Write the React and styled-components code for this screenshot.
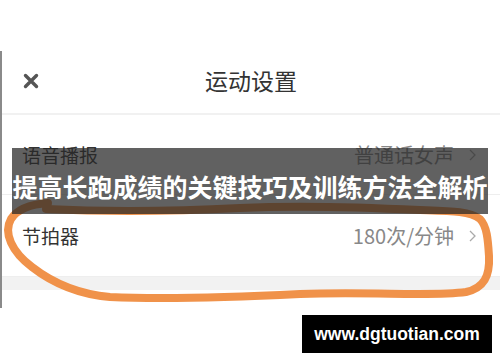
import React from 'react'
import styled, { createGlobalStyle } from 'styled-components';

const GlobalStyle = createGlobalStyle`
  body {
    margin: 0;
    background: #fff;
    font-family: "Noto Sans CJK SC", "Noto Sans", sans-serif;
  }
`;

const settings = [
  { label: '语音播报', value: '普通话女声', height: 80 },
  { label: '节拍器', value: '180次/分钟', height: 82 },
];

const CloseIcon = () => (
  <svg width="16" height="16" viewBox="0 0 16 16">
    <path d="M2.5 2.5 L13.5 13.5 M13.5 2.5 L2.5 13.5" stroke="#555" strokeWidth="3.4" strokeLinecap="round" />
  </svg>
);

const Chevron = () => (
  <svg width="7" height="12" viewBox="0 0 7 12">
    <polyline points="1,1 6,6 1,11" fill="none" stroke="#aaa" strokeWidth="1.3" />
  </svg>
);

export default function App() {
  return (
    <>
      <GlobalStyle />
      <Page>
        <Phone>
          <Header>
            <CloseBtn><CloseIcon /></CloseBtn>
            <Title>运动设置</Title>
            <span />
          </Header>
          {settings.map((s) => (
            <Row key={s.label} $h={s.height}>
              <Label>{s.label}</Label>
              <Value>
                {s.value}
                <Chevron />
              </Value>
            </Row>
          ))}
          <SectionGap />
        </Phone>

        {/* 手描きの丸 */}
        <Scribble viewBox="0 0 500 362" width="500" height="362">
          <path
            d="M48 203 C34 204 18 208 11 219 C3 233 12 252 32 267 C50 281 76 294 110 297
               C170 300 240 297 300 294 C370 291 430 297 466 292 C484 288 490 276 489 256
               C488 240 487 226 480 219 C470 211 450 211 420 210 C360 207 300 205 240 208
               C180 211 110 212 46 209"
            fill="none"
            stroke="#F0924A"
            strokeWidth="8"
            strokeLinecap="round"
            strokeLinejoin="round"
          />
        </Scribble>

        <Banner>提高长跑成绩的关键技巧及训练方法全解析</Banner>
        <Watermark>www.dgtuotian.com</Watermark>
      </Page>
    </>
  )
}

const Page = styled.div`
  position: relative;
  width: 500px;
  height: 362px;
  padding-top: 51px;
  box-sizing: border-box;
  overflow: hidden;
`;

const Phone = styled.div`
  height: 257px;
  border-left: 2px solid #8a8a8a;
  display: flex;
  flex-direction: column;
`;

const Header = styled.div`
  height: 64px;
  box-sizing: border-box;
  padding-bottom: 4px;
  display: grid;
  grid-template-columns: 1fr auto 1fr;
  align-items: center;
  border-bottom: 2px solid #f1f1f1;
`;

const CloseBtn = styled.div`
  padding-left: 21px;
  padding-top: 2px;
  display: flex;
  align-items: center;
`;

const Title = styled.div`
  font-size: 23px;
  color: #333;
`;

const Row = styled.div`
  height: ${(p) => p.$h}px;
  box-sizing: border-box;
  display: flex;
  align-items: center;
  justify-content: space-between;
  padding: 0 24px 0 20px;
  border-bottom: 1px solid #eee;
`;

const Label = styled.div`
  font-size: 19px;
  color: #333;
`;

const Value = styled.div`
  display: flex;
  align-items: center;
  gap: 15px;
  font-size: 20px;
  color: #888;
`;

const SectionGap = styled.div`
  height: 13px;
  background: #f2f2f2;
`;

const Scribble = styled.svg`
  position: absolute;
  left: 0;
  top: 0;
  pointer-events: none;
`;

const Banner = styled.div`
  position: absolute;
  left: 12px;
  top: 148px;
  width: 476px;
  height: 66px;
  background: rgba(40, 40, 40, 0.735);
  color: #fff;
  font-size: 25px;
  font-weight: 700;
  line-height: 1;
  display: flex;
  align-items: center;
  justify-content: center;
  padding-top: 10px;
  box-sizing: border-box;
  white-space: nowrap;
`;

const Watermark = styled.div`
  position: absolute;
  left: 302px;
  top: 315px;
  width: 190px;
  height: 38px;
  background: #000;
  color: #fff;
  font-family: "Liberation Sans", Arial, sans-serif;
  font-size: 17.5px;
  font-weight: 700;
  display: flex;
  align-items: center;
  justify-content: center;
`;
